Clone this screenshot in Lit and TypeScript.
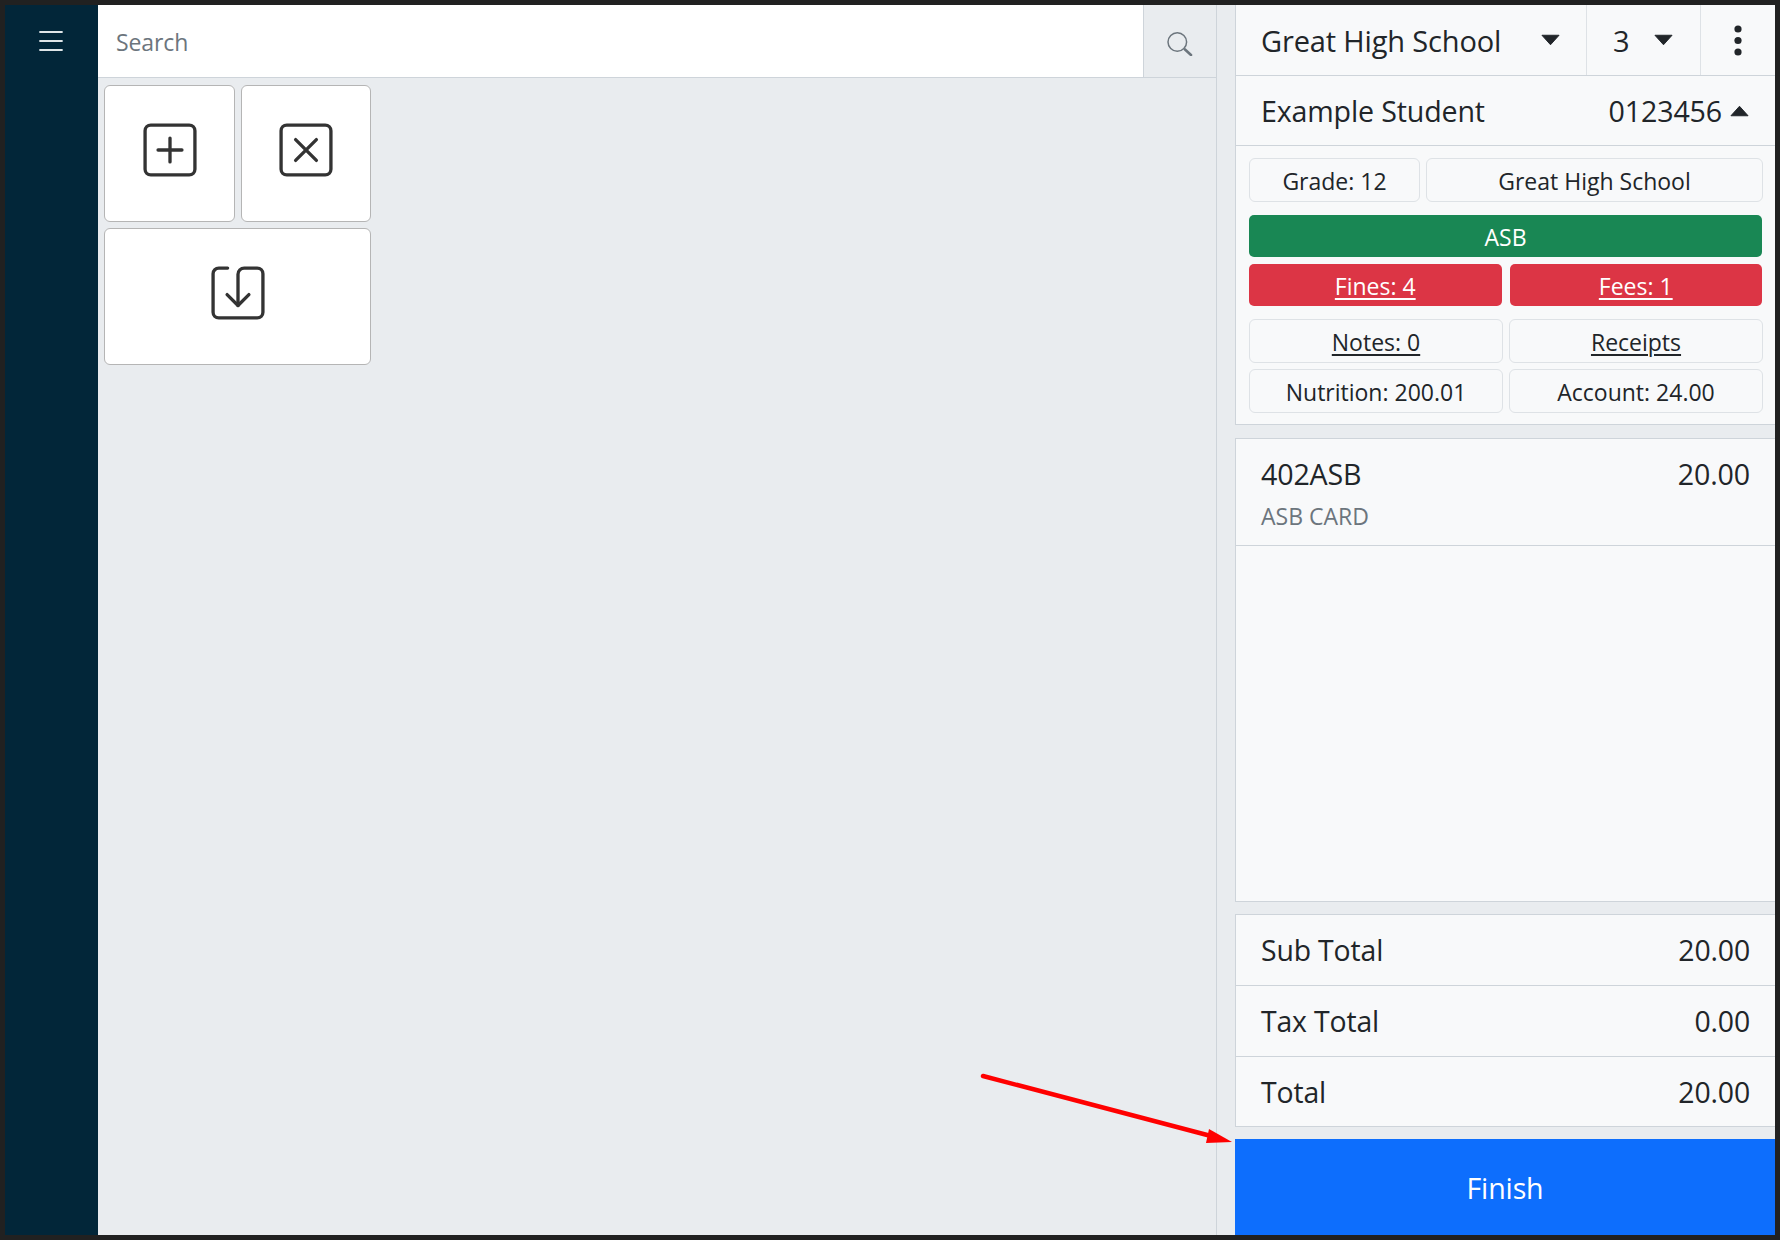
import { LitElement, html, css, svg } from "lit";
import { customElement } from "lit/decorators.js";

const caret = (up = false) => html`<svg class="caret" viewBox="0 0 20 12" aria-hidden="true">
  <path d=${up ? "M10 1 L19 11 L1 11 Z" : "M1 1 L19 1 L10 11 Z"} fill="#212529" stroke="#212529" stroke-width="1" stroke-linejoin="round"></path>
</svg>`;

const tile = (inner: unknown) => html`<svg class="tile-icon" viewBox="0 0 52 52" fill="none" stroke="#333" stroke-width="3.2" stroke-linecap="round" stroke-linejoin="round" aria-hidden="true">${inner}</svg>`;

@customElement("app-root")
export class AppRoot extends LitElement {
  static styles = css`
    :host { display: block; width: 1780px; height: 1240px; box-sizing: border-box; padding: 5px; background: #212121;
      font-family: "Open Sans", "Liberation Sans", sans-serif; color: #212529; overflow: hidden; position: relative; }
    * { box-sizing: border-box; }
    .app { display: flex; height: 100%; background: #e9ecef; }
    .side { width: 93px; background: #022639; display: flex; justify-content: center; padding: 26px 2px 0 0; flex: none; }
    .side svg { width: 24px; height: 20px; }
    .main { width: 1119px; flex: none; border-right: 1px solid #ced4da; display: flex; flex-direction: column; }
    .search { height: 73px; display: flex; background: #fff; border-bottom: 1px solid #ced4da; flex: none; }
    .search .ph { flex: 1; padding: 2px 0 0 18px; display: flex; align-items: center; font-size: 23px; letter-spacing: -0.1px; color: #6c757d; }
    .search .btn { width: 73px; background: #e9ecef; border-left: 1px solid #ced4da; display: flex; align-items: center; justify-content: center; }
    .search .btn svg { width: 26px; height: 30px; }
    .tiles { display: grid; grid-template-columns: 131px 130px; gap: 6px 6px; padding: 7px 0 0 6px; align-content: start; }
    .tile { height: 137px; background: #fff; border: 1px solid #b5b5b5; border-radius: 6px; display: flex; justify-content: center; padding-top: 37px; }
    .tile.wide { grid-column: 1 / 3; }
    .tile-icon { width: 54px; height: 54px; }
    .right { margin-left: 18px; width: 540px; flex: none; display: flex; flex-direction: column; }
    .panel { background: #f8f9fa; border-left: 1px solid #ced4da; }
    .top { height: 71px; display: flex; border-bottom: 1px solid #ced4da; font-size: 29px; letter-spacing: -0.15px; }
    .top > div { display: flex; align-items: center; height: 70px; }
    .school { width: 351px; padding: 0 26px 0 25px; justify-content: space-between; border-right: 1px solid #dee2e6; }
    .num { width: 114px; padding: 0 27px 0 26px; justify-content: space-between; border-right: 1px solid #dee2e6; }
    .more { flex: 1; justify-content: center; }
    .more svg { width: 10px; height: 32px; }
    .caret { width: 19px; height: 12px; flex: none; }
    .student { height: 70px; display: flex; align-items: center; justify-content: space-between; padding: 0 26px 0 25px; border-bottom: 1px solid #ced4da; font-size: 28.6px; letter-spacing: -0.15px; }
    .student .id { display: flex; align-items: center; gap: 8px; }
    .info { padding: 12px 12px 0 13px; display: flex; flex-direction: column; border-bottom: 1px solid #ced4da; height: 279px; }
    .row { display: grid; gap: 6px; }
    .r1 { grid-template-columns: 171px 1fr; margin-bottom: 13px; }
    .r2 { grid-template-columns: 1fr 1fr; }
    .reds { gap: 8px; padding-right: 1px; }
    .chip { height: 44px; padding-top: 2px; border: 1px solid #dee2e6; border-radius: 6px; display: flex; align-items: center; justify-content: center; font-size: 23px; }
    .solid { height: 42px; border: none; color: #fff; border-radius: 5px; }
    .green { background: #198754; margin: 0 1px 7px 0; }
    .red { background: #dc3545; margin-bottom: 13px; }
    u { text-underline-offset: 3px; text-decoration-thickness: 1.5px; }
    .gap6 { margin-bottom: 6px; }
    .items { margin-top: 13px; flex: 1; border-top: 1px solid #ced4da; border-bottom: 1px solid #ced4da; }
    .item { height: 107px; padding: 16px 25px 0 25px; border-bottom: 1px solid #ced4da; }
    .item .l1 { display: flex; justify-content: space-between; font-size: 28.6px; letter-spacing: -0.15px; line-height: 38px; }
    .item .l2 { font-size: 23px; color: #6c757d; line-height: 30px; margin-top: 8px; }
    .totals { margin-top: 12px; border-top: 1px solid #ced4da; border-bottom: 1px solid #ced4da; }
    .tr { height: 71px; display: flex; align-items: center; justify-content: space-between; padding: 0 25px 0 25px; font-size: 28.4px; letter-spacing: -0.15px; border-bottom: 1px solid #ced4da; }
    .tr:last-child { border-bottom: none; height: 69px; }
    .finish { margin-top: 12px; height: 96px; background: #0d6efd; color: #fff; display: flex; align-items: center; justify-content: center; font-size: 28.6px; letter-spacing: -0.15px; flex: none; }
    .arrow { position: absolute; left: 975px; top: 1070px; width: 265px; height: 80px; pointer-events: none; }
  `;

  render() {
    return html`
      <div class="app">
        <nav class="side">
          <svg viewBox="0 0 24 20" fill="none" stroke="#dfe5e8" stroke-width="1.8" aria-hidden="true">
            <path d="M1 1h22M1 10h22M1 19h22" stroke-linecap="round"></path>
          </svg>
        </nav>
        <section class="main">
          <div class="search">
            <div class="ph">Search</div>
            <div class="btn">
              <svg viewBox="0 0 26 30" fill="none" stroke="#6c757d" stroke-linecap="round" aria-hidden="true">
                <circle cx="10.3" cy="16" r="9.3" stroke-width="1.5"></circle>
                <path d="M18 23.500l6 5.500" stroke-width="2.6"></path>
              </svg>
            </div>
          </div>
          <div class="tiles">
            <div class="tile">${tile(svg`<rect x="2" y="2" width="48" height="48" rx="5.500"></rect><path d="M26 14.500v23M14.500 26h23"></path>`)}</div>
            <div class="tile">${tile(svg`<rect x="2" y="2" width="48" height="48" rx="5.500"></rect><path d="M16 16l20 20M36 16L16 36"></path>`)}</div>
            <div class="tile wide">${tile(svg`<path d="M16 2H7.500A5.500 5.500 0 0 0 2 7.500v37A5.500 5.500 0 0 0 7.500 50h37a5.500 5.500 0 0 0 5.500-5.500v-37A5.500 5.500 0 0 0 44.500 2H32a6 6 0 0 0-6 6v30"></path><path d="M15.500 27.500L26 38l10.500-10.500"></path>`)}</div>
          </div>
        </section>
        <aside class="right">
          <div class="panel top">
            <div class="school"><span>Great High School</span>${caret()}</div>
            <div class="num"><span>3</span>${caret()}</div>
            <div class="more">
              <svg viewBox="0 0 10 32" fill="#212529" aria-hidden="true"><circle cx="5" cy="5" r="3.6"></circle><circle cx="5" cy="16.500" r="3.6"></circle><circle cx="5" cy="28" r="3.6"></circle></svg>
            </div>
          </div>
          <div class="panel student"><span>Example Student</span><span class="id">0123456 ${caret(true)}</span></div>
          <div class="panel info">
            <div class="row r1"><div class="chip">Grade: 12</div><div class="chip">Great High School</div></div>
            <div class="chip solid green">ASB</div>
            <div class="row r2 reds">
              <div class="chip solid red"><u>Fines: 4</u></div><div class="chip solid red"><u>Fees: 1</u></div>
            </div>
            <div class="row r2 gap6"><div class="chip"><u>Notes: 0</u></div><div class="chip"><u>Receipts</u></div></div>
            <div class="row r2"><div class="chip">Nutrition: 200.01</div><div class="chip">Account: 24.00</div></div>
          </div>
          <div class="panel items">
            <div class="item">
              <div class="l1"><span>402ASB</span><span>20.00</span></div>
              <div class="l2">ASB CARD</div>
            </div>
          </div>
          <div class="panel totals">
            <div class="tr"><span>Sub Total</span><span>20.00</span></div>
            <div class="tr"><span>Tax Total</span><span>0.00</span></div>
            <div class="tr"><span>Total</span><span>20.00</span></div>
          </div>
          <div class="finish">Finish</div>
        </aside>
      </div>
      <svg class="arrow" viewBox="0 0 265 80" aria-hidden="true">
        <path d="M8 6L236 66" stroke="#ff0000" stroke-width="4.500" stroke-linecap="round" fill="none"></path>
        <path d="M234 59L257 72L231 73Z" fill="#ff0000"></path>
      </svg>
    `;
  }
}
